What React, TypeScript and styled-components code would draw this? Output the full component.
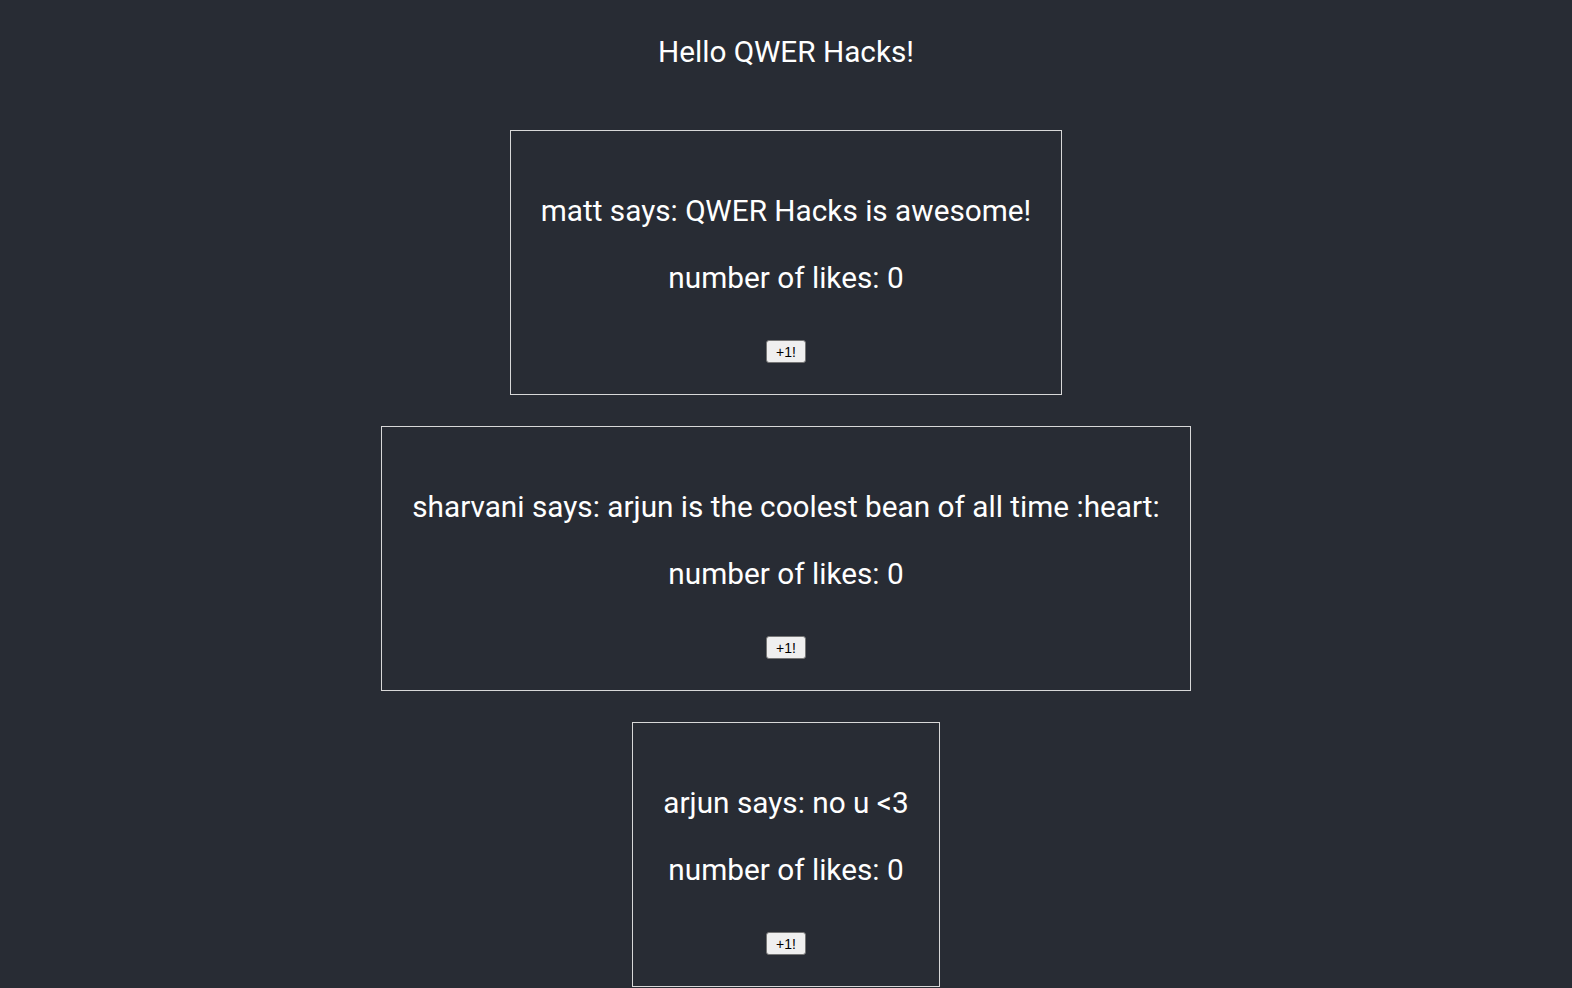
import React from "react";
import styled, { createGlobalStyle } from "styled-components";

const GlobalStyle = createGlobalStyle`
  html, body {
    margin: 0;
    padding: 0;
    background: #282c34;
  }
  body {
    font-family: Roboto, "Noto Sans", sans-serif;
    color: #ffffff;
  }
`;

const Page = styled.div`
  min-height: 988px;
  background: #282c34;
  display: flex;
  flex-direction: column;
  align-items: center;
  padding-top: 33px;
  box-sizing: border-box;
  font-size: 29.76px;
`;

const Title = styled.div`
  font-size: 29.76px;
  line-height: 37px;
  margin: 0;
`;

const PostList = styled.div`
  display: flex;
  flex-direction: column;
  align-items: center;
  gap: 31px;
  margin-top: 60px;
`;

const Card = styled.div`
  border: 1px solid #d8d8d8;
  padding: 30px;
  display: flex;
  flex-direction: column;
  align-items: center;
  gap: 30px;
`;

const Line = styled.p`
  margin: 0;
  font-size: 29.76px;
  line-height: 37px;
  white-space: nowrap;
  &:first-child {
    margin-top: 31px;
  }
`;

const ButtonRow = styled.div`
  height: 38px;
  display: flex;
  justify-content: center;
  align-items: flex-start;
  padding-top: 14px;
  box-sizing: border-box;
`;

const LikeButton = styled.button`
  font-family: "Liberation Sans", Arial, sans-serif;
  font-size: 14px;
  line-height: 16px;
  height: 23px;
  box-sizing: border-box;
  color: #000;
  background: #efefef;
  border: 1px solid #767676;
  border-radius: 3px;
  padding: 2px 9px;
  cursor: pointer;
`;

type Post = { author: string; text: string; likes: number };

const posts: Post[] = [
  { author: "matt", text: "QWER Hacks is awesome!", likes: 0 },
  { author: "sharvani", text: "arjun is the coolest bean of all time :heart:", likes: 0 },
  { author: "arjun", text: "no u <3", likes: 0 },
];

export default function App() {
  return (
    <>
      <GlobalStyle />
      <Page>
        <Title>Hello QWER Hacks!</Title>
        <PostList>
          {posts.map((p) => (
            <Card key={p.author}>
              <Line>
                {p.author} says: {p.text}
              </Line>
              <Line>number of likes: {p.likes}</Line>
              <ButtonRow>
                <LikeButton>+1!</LikeButton>
              </ButtonRow>
            </Card>
          ))}
        </PostList>
      </Page>
    </>
  );
}
